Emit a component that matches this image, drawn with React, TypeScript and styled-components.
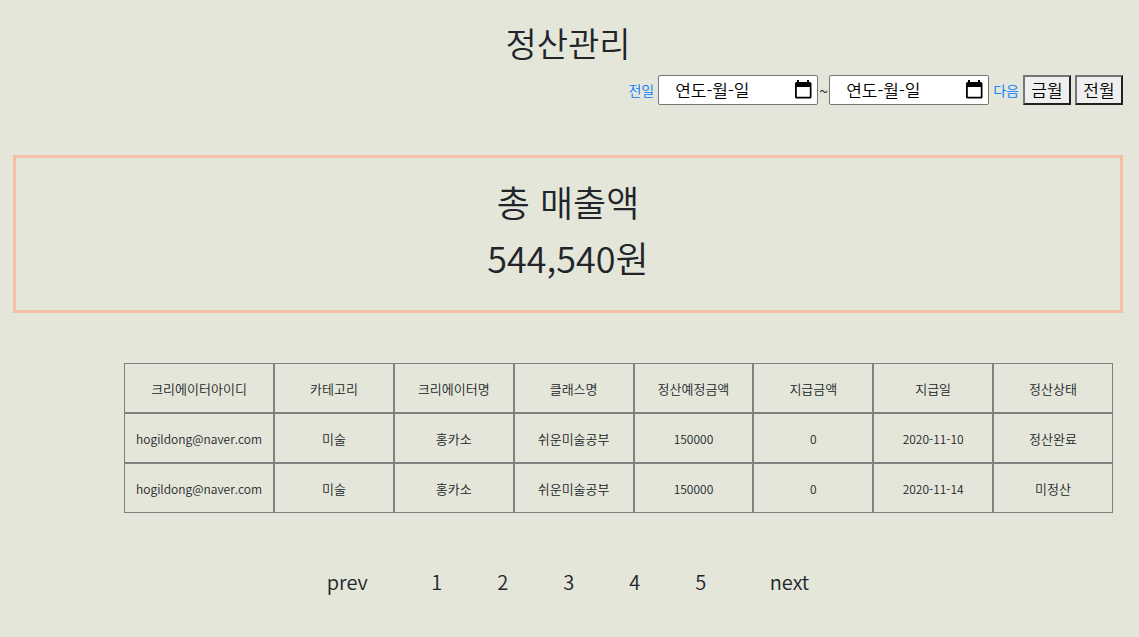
import React from "react";
import styled, { createGlobalStyle } from "styled-components";

const GlobalStyle = createGlobalStyle`
  *, *::before, *::after { box-sizing: border-box; }
  body {
    margin: 0;
    background: #e4e6d9;
    color: #212529;
    font-family: "Noto Sans CJK KR", "Noto Sans", sans-serif;
    font-size: 13px;
    font-weight: 350;
    line-height: 20px;
  }
`;

const Page = styled.main`
  padding: 14px 16px 24px 13px;
`;

const Title = styled.h1`
  margin: 0;
  font-size: 34px;
  font-weight: 350;
  line-height: 58px;
  text-align: center;
`;

const FilterBar = styled.form`
  display: flex;
  justify-content: flex-end;
  align-items: center;
  gap: 4px;
  margin-top: 3px;
`;

const TextLink = styled.a`
  color: #007bff;
  font-size: 14px;
  text-decoration: none;
`;

const DateRange = styled.div`
  display: flex;
  align-items: center;
`;

const Tilde = styled.span`
  width: 11px;
  font-size: 16px;
  text-align: center;
`;

const DateBox = styled.label`
  display: flex;
  align-items: center;
  width: 160px;
  height: 30px;
  padding: 0 5px 0 16px;
  border: 1px solid #767676;
  border-radius: 2px;
  background: #fff;
`;

const DateInput = styled.input`
  flex: 1;
  min-width: 0;
  padding: 0;
  border: 0;
  outline: 0;
  background: transparent;
  color: #000;
  font: inherit;
  font-size: 17px;
  line-height: 26px;
  &::placeholder { color: #000; opacity: 1; }
`;

const MonthButton = styled.button`
  width: 48px;
  height: 30px;
  padding: 0;
  border: 2px solid;
  border-color: #767676 #212121 #212121 #767676;
  background: #efefef;
  color: #000;
  font: inherit;
  font-size: 17px;
  line-height: 26px;
`;

const Summary = styled.section`
  margin-top: 50px;
  padding: 15px 0 25px;
  border: 3px solid #f4bea7;
  text-align: center;
`;

const SummaryLabel = styled.h2`
  margin: 0;
  font-size: 36px;
  font-weight: 350;
  line-height: 56px;
`;

const SummaryAmount = styled.p`
  margin: 0;
  font-size: 36px;
  line-height: 56px;
`;

const TableArea = styled.div`
  margin: 50px 10px 0 10%;
`;

const Table = styled.table`
  width: 100%;
  table-layout: fixed;
  border-collapse: separate;
  border-spacing: 0;
  text-align: center;
`;

const HeadCell = styled.th<{ $wide?: boolean }>`
  width: ${(p) => (p.$wide ? "150px" : "auto")};
  height: 50px;
  padding: 2px 0 0;
  border: 1px solid #808080;
  font-weight: 350;
`;

const Cell = styled.td<{ $latin?: boolean }>`
  height: 50px;
  padding: 2px 0 0;
  border: 1px solid #808080;
  font-size: ${(p) => (p.$latin ? "12px" : "13px")};
`;

const Pager = styled.nav`
  display: flex;
  justify-content: center;
  gap: 36px;
  margin-top: 54px;
  font-size: 20px;
  line-height: 30px;
`;

const PageNumbers = styled.div`
  display: flex;
`;

const PageLink = styled.a<{ $number?: boolean }>`
  width: ${(p) => (p.$number ? "66px" : "auto")};
  color: inherit;
  text-align: center;
  text-decoration: none;
`;

const CalendarIcon = () => (
  <svg width="18" height="20" viewBox="0 0 18 20" aria-hidden="true">
    <path
      fill="#000"
      fillRule="evenodd"
      d="M3 0h2v2h8V0h2v2h1a1.500 1.500 0 0 1 1.500 1.500v13.500a1.500 1.500 0 0 1-1.500 1.500H2.500A1.500 1.500 0 0 1 1 17V3.500A1.500 1.500 0 0 1 2.500 2H3zM2.800 7v9.800h13V7z"
    />
  </svg>
);

const DateField = ({ label }: { label: string }) => (
  <DateBox>
    <DateInput type="text" placeholder="연도-월-일" aria-label={label} />
    <CalendarIcon />
  </DateBox>
);

const columns = [
  "크리에이터아이디",
  "카테고리",
  "크리에이터명",
  "클래스명",
  "정산예정금액",
  "지급금액",
  "지급일",
  "정산상태",
];

const rows = [
  ["hogildong@naver.com", "미술", "홍카소", "쉬운미술공부", "150000", "0", "2020-11-10", "정산완료"],
  ["hogildong@naver.com", "미술", "홍카소", "쉬운미술공부", "150000", "0", "2020-11-14", "미정산"],
];

const isLatin = (text: string) => /^[\x20-\x7e]+$/.test(text);

export default function App() {
  return (
    <>
      <GlobalStyle />
      <Page lang="ko">
        <Title>정산관리</Title>
        <FilterBar>
          <TextLink href="#prev-day">전일</TextLink>
          <DateRange>
            <DateField label="시작일" />
            <Tilde>~</Tilde>
            <DateField label="종료일" />
          </DateRange>
          <TextLink href="#next-day">다음</TextLink>
          <MonthButton type="button">금월</MonthButton>
          <MonthButton type="button">전월</MonthButton>
        </FilterBar>
        <Summary>
          <SummaryLabel>총 매출액</SummaryLabel>
          <SummaryAmount>544,540원</SummaryAmount>
        </Summary>
        <TableArea>
          <Table>
            <thead>
              <tr>
                {columns.map((name, i) => (
                  <HeadCell key={name} scope="col" $wide={i === 0}>
                    {name}
                  </HeadCell>
                ))}
              </tr>
            </thead>
            <tbody>
              {rows.map((row) => (
                <tr key={row[6]}>
                  {row.map((text, i) => (
                    <Cell key={columns[i]} $latin={isLatin(text)}>
                      {text}
                    </Cell>
                  ))}
                </tr>
              ))}
            </tbody>
          </Table>
        </TableArea>
        <Pager aria-label="페이지">
          <PageLink href="#prev">prev</PageLink>
          <PageNumbers>
            {[1, 2, 3, 4, 5].map((n) => (
              <PageLink key={n} href={`#page-${n}`} $number>
                {n}
              </PageLink>
            ))}
          </PageNumbers>
          <PageLink href="#next">next</PageLink>
        </Pager>
      </Page>
    </>
  );
}
